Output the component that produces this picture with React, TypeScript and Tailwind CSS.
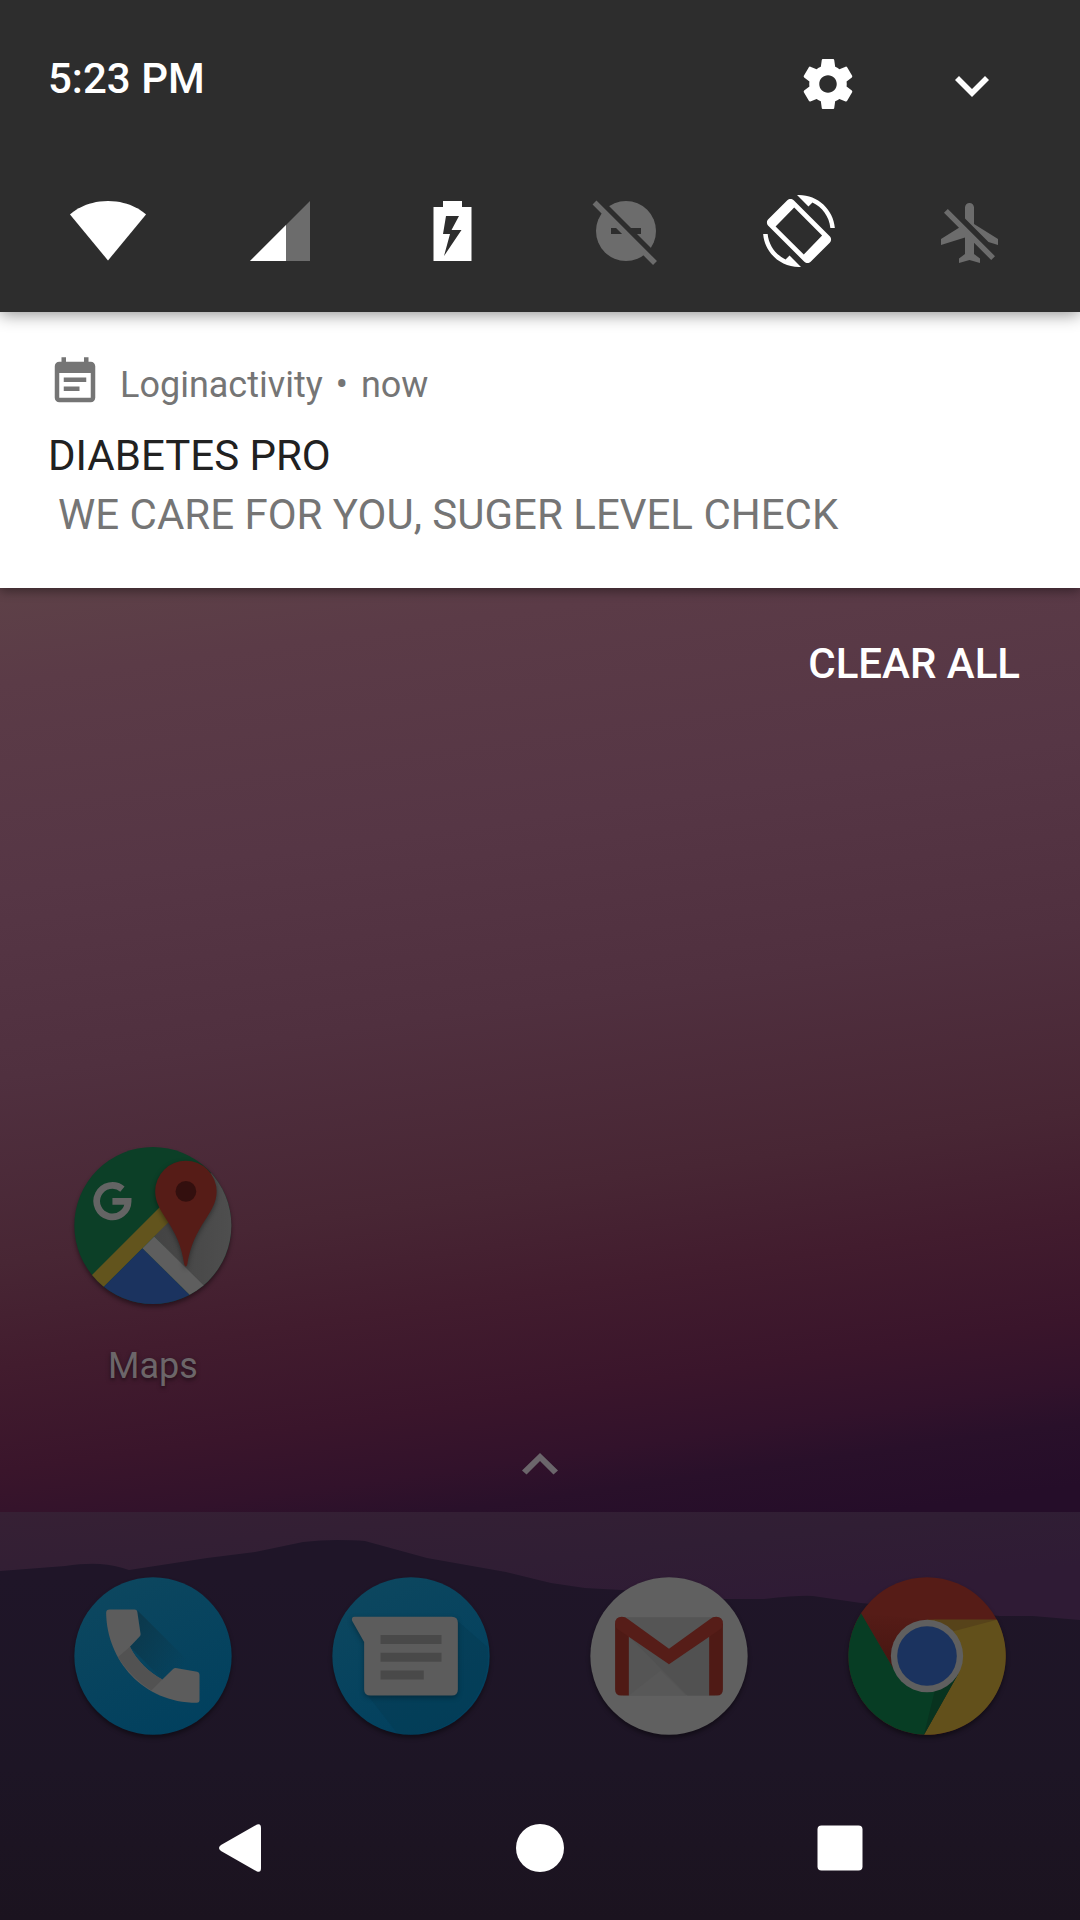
import React from "react";

const GREY = "#6c6c6c";

function StatusIcon({ label, children }: { label: string; children: React.ReactNode }) {
  return (
    <button type="button" aria-label={label} className="flex justify-center">
      <svg viewBox="0 0 84 72" className="h-[72px] w-[84px]" fill="#fff" aria-hidden="true">
        {children}
      </svg>
    </button>
  );
}

function StatusIcons() {
  return (
    <div className="mt-[81px] grid grid-cols-6 px-[22px]">
      <StatusIcon label="Wi-Fi">
        <path d="M42 65.500L4 19.400C5.500 18 19 6 42 6s36.500 12 38 13.400z" />
      </StatusIcon>
      <StatusIcon label="Mobile signal">
        <path d="M11 66L71 6v60z" fill={GREY} />
        <path d="M11 66L47 30v36z" />
      </StatusIcon>
      <StatusIcon label="Battery charging">
        <path
          fillRule="evenodd"
          d="M31 6h19v6h9.500v54h-38V12H31zM34 21l-3 18h7l-6 22 17.500-26h-10L47 21z"
        />
      </StatusIcon>
      <StatusIcon label="Do not disturb">
        <defs>
          <mask id="dnd-cut">
            <rect width="84" height="72" fill="#fff" />
            <rect x="27" y="33" width="30" height="6" fill="#000" />
            <path d="M0-14L84 70v8L0-6z" fill="#000" />
          </mask>
        </defs>
        <circle cx="42" cy="36" r="30" fill={GREY} mask="url(#dnd-cut)" />
        <path d="M10.500 7.500L71 68" stroke={GREY} strokeWidth="5.500" />
      </StatusIcon>
      <StatusIcon label="Auto-rotate">
        <path
          transform="translate(6 0) scale(3)"
          fillRule="evenodd"
          d="M16.480 2.520c3.270 1.550 5.610 4.720 5.970 8.480h1.500C23.440 4.840 18.290 0 12 0l-.66.03 3.810 3.810 1.330-1.320zM10.230 1.750c-.59-.59-1.540-.59-2.120 0L1.750 8.110c-.59.59-.59 1.540 0 2.120l12.020 12.020c.59.59 1.540.59 2.120 0l6.360-6.360c.59-.59.59-1.540 0-2.120zM10.400 4.200L4.200 10.500l9.400 9.300 6.100-6.300zM7.520 21.480C4.250 19.940 1.910 16.760 1.550 13H.05C.56 19.160 5.710 24 12 24l.66-.03-3.810-3.810z"
        />
      </StatusIcon>
      <StatusIcon label="Airplane mode">
        <path
          fill={GREY}
          transform="translate(5 2) scale(3)"
          d="M13 9V3.500c0-.83-.67-1.500-1.500-1.500S10 2.670 10 3.500v3.680l7.830 7.830L21 16v-2l-8-5zM3 5.270l4.990 4.990L2 14v2l8-2.500V19l-2 1.500V22l3.500-1 3.500 1v-1.500L13 19v-3.730L18.730 21 20 19.730 4.270 4 3 5.270z"
        />
      </StatusIcon>
    </div>
  );
}

function AppIcon({ viewBox, children }: { viewBox: string; children: React.ReactNode }) {
  return (
    <svg
      viewBox={viewBox}
      className="h-[158px] w-[158px] overflow-visible drop-shadow-[0_3px_2px_rgba(0,0,0,0.4)]"
      aria-hidden="true"
    >
      {children}
    </svg>
  );
}

function MapsIcon() {
  return (
    <AppIcon viewBox="74 80 473 473">
      <defs>
        <clipPath id="maps-disc">
          <circle cx="310" cy="315" r="235" />
        </clipPath>
        <linearGradient id="maps-grey" x1="0" x2="1" y1="0" y2="0">
          <stop offset="0" stopColor="#434343" />
          <stop offset="1" stopColor="#4f4f4f" />
        </linearGradient>
      </defs>
      <g clipPath="url(#maps-disc)">
        <rect x="74" y="79" width="472" height="472" fill="#0c3f27" />
        <path d="M314 348L500 140l60 0v400H500z" fill="url(#maps-grey)" />
        <path d="M91 500L380 211l36 35-290 290z" fill="#62541d" />
        <path d="M279 383L120 542v20h340z" fill="#1b335f" />
        <path d="M279 383l35-35 172 170-38 32z" fill="#5e5e5e" />
      </g>
      <path
        d="M409 121a92 92 0 0 1 92 92c0 67-70 100-88 219q-4 12-9 0c-15-119-87-152-87-219a92 92 0 0 1 92-92z"
        fill="#561c17"
        className="drop-shadow-[0_6px_8px_rgba(0,0,0,0.4)]"
      />
      <circle cx="409" cy="213" r="31" fill="#330f0e" />
      <path d="M219 206A47 47 0 1 0 236 243H189" fill="none" stroke="#646464" strokeWidth="20" />
    </AppIcon>
  );
}

function BlueDisc({ id, cx }: { id: string; cx: number }) {
  return (
    <>
      <defs>
        <linearGradient id={id} x1="0.2" y1="0" x2="0.7" y2="1">
          <stop offset="0" stopColor="#0d475f" />
          <stop offset="1" stopColor="#01405e" />
        </linearGradient>
      </defs>
      <circle cx={cx} cy="317" r="235" fill={`url(#${id})`} />
    </>
  );
}

function PhoneIcon() {
  return (
    <AppIcon viewBox="74 81 472 472">
      <BlueDisc id="phone-disc" cx={310} />
      <defs>
        <linearGradient id="phone-shade" x1="0" y1="0.3" x2="0.8" y2="0.8">
          <stop offset="0" stopColor="#0c3547" />
          <stop offset="1" stopColor="#0c3547" stopOpacity="0" />
        </linearGradient>
      </defs>
      <path d="M263 180L445 362l-75-6-32 31-97-98 32-34z" fill="url(#phone-shade)" opacity="0.8" />
      <path
        d="M180 178H255Q262 178 263 185L273 252Q273 256 270 259L241 289C262 332 300 366 338 387L370 356Q373 353 378 353L442 364Q449 366 449 373V448Q449 457 441 457C280 457 172 330 170 188Q170 178 180 178Z"
        fill="#5c5c5c"
      />
      <path d="M241 289C262 332 300 366 338 387L305 420Q246 384 205 321Z" fill="#525252" />
    </AppIcon>
  );
}

function MessagesIcon() {
  return (
    <AppIcon viewBox="67 81 472 472">
      <BlueDisc id="messages-disc" cx={303} />
      <path d="M437 208L531 290A235 235 0 0 1 262 548L170 430z" fill="#06394f" opacity="0.4" />
      <path
        d="M135 200H425Q443 200 443 218V417Q443 435 425 435H182Q163 435 163 417V275L127 212Q124 200 135 200Z"
        fill="#5c5c5c"
        className="drop-shadow-[0_6px_8px_rgba(0,0,0,0.3)]"
      />
      <path d="M212 254h182v27H212zM212 307h182v27H212zM212 360h129v27H212z" fill="#494949" />
    </AppIcon>
  );
}

function GmailIcon() {
  return (
    <AppIcon viewBox="61 81 472 472">
      <circle cx="297" cy="317" r="235" fill="#606060" />
      <path d="M160 201h274v234H160z" fill="#555" />
      <path d="M177 258L352 435h65V258L297 342z" fill="#515151" />
      <path d="M177 435l95-75 75 75z" fill="#585858" />
      <path d="M136 220h41v215H154Q136 435 136 417zM417 220h41v197Q458 435 440 435H417z" fill="#4f1a15" />
      <path
        d="M136 220Q136 200 156 200 166 200 175 207L297 295 419 207Q428 200 438 200 458 200 458 220 458 232 449 238L297 342 145 238Q136 232 136 220Z"
        fill="#561d18"
      />
    </AppIcon>
  );
}

function ChromeIcon() {
  return (
    <AppIcon viewBox="55 82 472 472">
      <defs>
        <linearGradient id="chrome-red" x1="0" y1="0" x2="0" y2="1">
          <stop offset="0" stopColor="#561c17" />
          <stop offset="1" stopColor="#451511" />
        </linearGradient>
      </defs>
      <circle cx="291" cy="318" r="235" fill="#561c17" />
      <path d="M95 190L300 210 191 356z" fill="url(#chrome-red)" />
      <path d="M291 210H500A235 235 0 0 1 282 553L384 372 291 318Z" fill="#62501b" />
      <path d="M310 210H500L370 244z" fill="#57431a" />
      <path d="M94 190L191 356 291 318 384 372 282 553A235 235 0 0 1 94 190Z" fill="#073d24" />
      <path d="M384 372L282 553l32-130z" fill="#08331f" />
      <circle cx="291" cy="318" r="108" fill="#5f5f5f" />
      <circle cx="291" cy="318" r="89" fill="#1b335f" />
    </AppIcon>
  );
}

function NavButton({ label, children }: { label: string; children: React.ReactNode }) {
  return (
    <button type="button" aria-label={label} className="flex items-center justify-center">
      <svg viewBox="0 0 48 48" className="size-12" fill="#fff" aria-hidden="true">
        {children}
      </svg>
    </button>
  );
}

export default function App() {
  return (
    <div className="flex min-h-screen flex-col bg-[linear-gradient(172deg,#5f4448_26%,#5b3b47_33%,#563645_43%,#50303f_52%,#482634_61%,#421c2e_66%,#3a152b_71%,#32122b_74%,#29102a_76%,#250d29_79%)] font-[Roboto,sans-serif]">
      <header className="relative z-20 bg-[#2d2d2d] pt-[54px] pb-[45px] text-white shadow-[0_2px_16px_rgba(0,0,0,0.45)]">
        <div className="flex items-start justify-between pr-[78px] pl-12">
          <time className="text-[42px] leading-[50px] font-medium">5:23 PM</time>
          <div className="flex gap-[84px]">
            <button type="button" aria-label="Settings">
              <svg viewBox="0 0 24 24" className="size-[60px]" fill="currentColor" aria-hidden="true">
                <path d="M19.430 12.980c.04-.32.07-.64.07-.98s-.03-.66-.07-.98l2.110-1.650c.19-.15.24-.42.12-.64l-2-3.460c-.12-.22-.39-.3-.61-.22l-2.490 1c-.52-.4-1.080-.73-1.690-.98l-.38-2.650C14.460 2.180 14.250 2 14 2h-4c-.25 0-.46.18-.49.42l-.38 2.650c-.61.25-1.170.59-1.690.98l-2.490-1c-.23-.09-.49 0-.61.22l-2 3.460c-.13.22-.07.49.12.64l2.110 1.650c-.04.32-.07.65-.07.98s.03.66.07.98l-2.110 1.650c-.19.15-.24.42-.12.64l2 3.460c.12.22.39.3.61.22l2.490-1c.52.4 1.080.73 1.690.98l.38 2.650c.03.24.24.42.49.42h4c.25 0 .46-.18.49-.42l.38-2.650c.61-.25 1.170-.59 1.690-.98l2.490 1c.23.09.49 0 .61-.22l2-3.460c.12-.22.07-.49-.12-.64l-2.110-1.650zM12 15.500c-1.930 0-3.500-1.570-3.500-3.500s1.570-3.500 3.500-3.500 3.500 1.570 3.500 3.500-1.570 3.500-3.500 3.500z" />
              </svg>
            </button>
            <button type="button" aria-label="Expand quick settings">
              <svg viewBox="0 0 60 60" className="size-[60px]" fill="currentColor" aria-hidden="true">
                <path d="M13 26l4-4 13 13 13-13 4 4-17 17z" />
              </svg>
            </button>
          </div>
        </div>
        <StatusIcons />
      </header>

      <article className="relative z-10 bg-white px-12 pt-[43px] pb-11 text-[#757575] shadow-[0_3px_10px_rgba(0,0,0,0.4)]">
        <div className="flex items-end gap-[18px]">
          <svg viewBox="0 0 24 24" className="size-[54px]" fill="currentColor" aria-hidden="true">
            <path d="M17 10H7v2h10v-2zm2-7h-1V1h-2v2H8V1H6v2H5c-1.110 0-1.990.9-1.990 2L3 19a2 2 0 0 0 2 2h14c1.100 0 2-.9 2-2V5c0-1.100-.9-2-2-2zm0 16H5V8h14v11zm-5-5H7v2h7v-2z" />
          </svg>
          <p className="flex gap-[13px] text-4xl leading-[48px]">
            <span>Loginactivity</span>
            <span>•</span>
            <span>now</span>
          </p>
        </div>
        <h1 className="mt-[17px] text-[42px] leading-[59px] text-[#212121]">DIABETES PRO</h1>
        <p className="pl-[10px] text-[42px] leading-[59px]">WE CARE FOR YOU, SUGER LEVEL CHECK</p>
      </article>

      <div className="mt-[51px] flex justify-end pr-[60px]">
        <button type="button" className="text-[42px] leading-[50px] font-medium text-white">
          CLEAR ALL
        </button>
      </div>

      <main className="mt-auto">
        <div className="grid grid-cols-4 px-6">
          <button type="button" className="flex flex-col items-center">
            <MapsIcon />
            <span className="mt-[37px] text-4xl leading-[48px] text-[#6c6669] [text-shadow:0_2px_4px_rgba(0,0,0,0.5)]">
              Maps
            </span>
          </button>
        </div>
        <div className="mt-[50px] mb-6 flex justify-center">
          <button type="button" aria-label="All apps">
            <svg viewBox="0 0 48 48" className="size-12" fill="#6b666b" aria-hidden="true">
              <path d="M24 13l18 17.500-4.500 4L24 21 10.500 34.500l-4.500-4z" />
            </svg>
          </button>
        </div>
      </main>

      <footer className="relative bg-[linear-gradient(174deg,#362034,#301e34_20%,#2f1b35_32%)]">
        <svg
          viewBox="0 0 1080 408"
          preserveAspectRatio="none"
          className="absolute inset-0 h-full w-full"
          aria-hidden="true"
        >
          <defs>
            <linearGradient id="hills" x1="0" y1="0" x2="0" y2="1">
              <stop offset="0.1" stopColor="#1f1528" />
              <stop offset="0.6" stopColor="#1d1525" />
              <stop offset="1" stopColor="#1b131f" />
            </linearGradient>
          </defs>
          <path
            fill="url(#hills)"
            d="M0 59L65 54Q85 51 100 52T129 58L207 46 255 40 303 30Q320 28 337 28T365 29L427 46 506 60 551 71 585 76 640 79 723 87 764 87Q800 83 813 84L861 91 1000 104 1033 104 1080 108V408H0z"
          />
        </svg>
        <div className="relative grid grid-cols-4 px-6 pt-[65px] pb-[41px]">
          <button type="button" aria-label="Phone" className="flex justify-center">
            <PhoneIcon />
          </button>
          <button type="button" aria-label="Messages" className="flex justify-center">
            <MessagesIcon />
          </button>
          <button type="button" aria-label="Gmail" className="flex justify-center">
            <GmailIcon />
          </button>
          <button type="button" aria-label="Chrome" className="flex justify-center">
            <ChromeIcon />
          </button>
        </div>
        <nav aria-label="System" className="relative grid h-36 grid-cols-3 px-[90px]">
          <NavButton label="Back">
            <path d="M41 0.500Q45 -1 45 4V44Q45 49 41 47.500L5 27Q1 24 5 21Z" />
          </NavButton>
          <NavButton label="Home">
            <circle cx="24" cy="24" r="24" />
          </NavButton>
          <NavButton label="Recent apps">
            <rect x="1.500" y="1.500" width="45" height="45" rx="4" />
          </NavButton>
        </nav>
      </footer>
    </div>
  );
}
